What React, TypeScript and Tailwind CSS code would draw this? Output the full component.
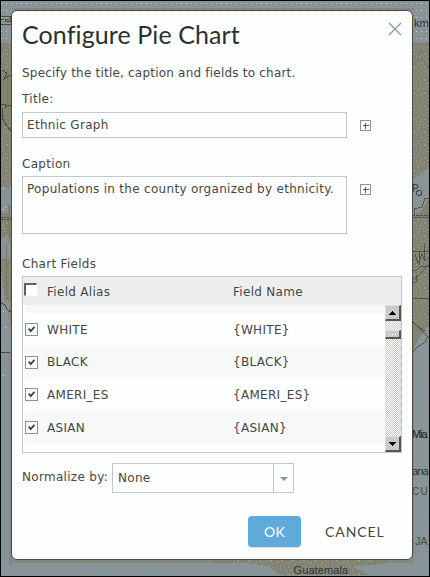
import React from "react";

const FIELDS = ["WHITE", "BLACK", "AMERI_ES", "ASIAN"];
const ROW_STYLES = [
  "flex h-[33px] items-center",
  "flex h-[32px] items-center bg-[#f7f8f8]",
  "flex h-[33px] items-center",
  "flex h-[33px] items-center bg-[#f7f8f8]",
];

function MapBackdrop() {
  return (
    <svg className="absolute inset-0" width="430" height="577" viewBox="0 0 430 577" shapeRendering="crispEdges">
      <defs>
        <pattern id="mottle" width="11" height="13" patternUnits="userSpaceOnUse">
          <path d="M0 0h2v1h-2zM3 2h1v2h-1zM1 4h2v1h-2zM6 1h2v2h-2zM9 4h1v2h-1zM5 6h2v1h-2zM2 7h1v2h-1zM8 8h2v1h-2zM0 10h1v2h-1zM4 10h3v1h-3zM9 11h1v1h-1z" fill="#8b9698" />
        </pattern>
        <pattern id="whiteDots" width="5" height="7" patternUnits="userSpaceOnUse">
          <path d="M1 3h1v1h-1z" fill="#cbd0cf" />
        </pattern>
        <pattern id="seaDots" width="13" height="9" patternUnits="userSpaceOnUse">
          <path d="M2 2h1v1h-1zM9 5h1v1h-1zM5 7h1v1h-1z" fill="#58a5cd" />
        </pattern>
        <pattern id="shade" width="2" height="2" patternUnits="userSpaceOnUse">
          <path d="M0 0h1v1h-1zM1 1h1v1h-1z" fill="#7d7d6b" />
        </pattern>
      </defs>
      <rect width="430" height="577" fill="#899498" />
      <path d="M1 2H429V5H1z" fill="url(#whiteDots)" />
      <path d="M415 5h14v36h-14zM1 9h7v30H1z" fill="url(#whiteDots)" />
      <path d="M0 43h12v140l-5 8 5 40v90l-3 10-4-30-5-40z" fill="#82826f" />
      <path d="M0 43h12v30H0zM0 125h12v225H0z" fill="url(#mottle)" />
      <path d="M1 187h7v26H1zM1 237h9v22H1zM3 302h6v34H3z" fill="#899498" />
      <path d="M3 188h1v1h-1zM5 207h1v1h-1zM3 209h1v1h-1zM4 228h1v1h-1zM3 311h1v1h-1zM5 327h1v1h-1zM3 375h1v1h-1z" fill="#dde0df" />
      <path d="M412 43h17v282l-8 10-9 17z" fill="#82826f" />
      <path d="M412 43h17v145h-17zM412 218h17v105h-17z" fill="url(#mottle)" />
      <path d="M412 180l9-6 8-6v30l-8 13-9 5z" fill="#899498" />
      <g fill="none" stroke="#494a41">
        <path d="M1 16h9v5H5v-2h4M1 19h3M1 24h10M2 70l5 3-3 6 7-4M1 104h4v4l3-3h4M2 108v10l5 8 5 6v4" />
        <path d="M1 217h11M1 219h11" strokeDasharray="2 1" />
        <path d="M1 303l4 2 2 4 5 4M1 352h11" />
        <path d="M412 215h17M414 217h15" strokeDasharray="3 1" />
        <path d="M414 215v-6l8-2 3-9h4M412 251h17M415 254l3 9 4-9 3 7 4-4M412 270h5l4-4 8 1M412 281l9-8 8-9M412 298h17M412 321l5 5 9 6M412 321l5 5 9 9 3 3M412 353l4-5 9-6 3-6M419 251v14M424 244v17M412 272v10h4v-7" strokeWidth=".8" />
        <circle cx="419" cy="193" r="2.5" strokeWidth="1" />
      </g>
      <path d="M412 43h17M419 50v5l4-4-4-1M412 66l9-8 7 10M6 245v54M9 205v38M7 82v22" fill="none" stroke="#777763" />
      <path d="M9 350h3v215H9zM412 355h2v205h-2zM12 560h402v3H12zM12 8h402v2H12z" fill="url(#shade)" />
      <path d="M213 559h174v4l-15 2-20 1 18 9H280l-12-9-23-3h-32z" fill="#82826f" />
      <path d="M225 559h150v16H260z" fill="url(#mottle)" />
      <path d="M1 565h230v10H1zM400 565h29v10h-29zM415 497h14v68h-14z" fill="url(#seaDots)" />
      <path d="M420 377h1v2h-1zM420 385h1v2h-1zM420 394h1v2h-1zM420 409h1v2h-1z" fill="#58a5cd" />
      <g fill="#30332f" fontFamily="Liberation Sans, sans-serif" fontSize="11">
        <text x="414" y="27" textLength="15">km</text>
        <text x="412" y="192" fontSize="10">P</text>
        <text x="412" y="438" fill="#171a19" textLength="16">Mia</text>
        <text x="412" y="475" textLength="17">ana</text>
        <text x="412" y="495" fontSize="10" fill="#4b4c43" textLength="16">CU</text>
        <text x="415" y="545" fill="#4b4c43" textLength="13">JA</text>
        <text x="293.5" y="574" textLength="55">Guatemala</text>
      </g>
    </svg>
  );
}

function ExpandButton() {
  return (
    <button className="flex size-[11px] shrink-0 border border-[#8b9599]">
      <svg width="9" height="9" viewBox="0 0 9 9" shapeRendering="crispEdges">
        <path d="M1.5 4.5h6M4.5 1.5v6" stroke="#5b5d54" />
      </svg>
    </button>
  );
}

function CheckedBox() {
  return (
    <span className="flex h-[13px] w-[13px] border border-[#879398] bg-[#fafbfb]">
      <svg width="11" height="11" viewBox="0 0 11 11">
        <path d="M2.7 4.7l2 2.4 3.8-4.2" fill="none" stroke="#42443f" strokeWidth="1.8" />
      </svg>
    </span>
  );
}

function ScrollArrow({ down = false }: { down?: boolean }) {
  return (
    <span className="flex h-4 w-4 shrink-0 items-center justify-center border-t border-r-2 border-b-2 border-l border-t-[#dededc] border-r-[#55564c] border-b-[#55564c] border-l-[#dededc] bg-[#c9cac9]">
      <svg width="7" height="4" viewBox="0 0 7 4" shapeRendering="crispEdges">
        <path d={down ? "M0 0h7v1H0zM1 1h5v1H1zM2 2h3v1H2zM3 3h1v1H3z" : "M3 0h1v1H3zM2 1h3v1H2zM1 2h5v1H1zM0 3h7v1H0z"} fill="#000" />
      </svg>
    </span>
  );
}

function ScrollBar() {
  return (
    <div className="flex h-[147px] w-4 flex-col bg-[conic-gradient(#c9c9c8_25%,#fff_0_50%,#c9c9c8_0_75%,#fff_0)] bg-size-[2px_2px]">
      <ScrollArrow />
      <span className="mt-[9px] flex h-[9px] w-4 items-center justify-center gap-[2px] border-t border-r-2 border-b-2 border-l border-t-[#dededc] border-r-[#55564c] border-b-[#55564c] border-l-[#dededc] bg-[#c9cac9]">
        <i className="size-px bg-white" />
        <i className="size-px bg-white" />
        <i className="size-px bg-white" />
      </span>
      <span className="mt-auto flex">
        <ScrollArrow down />
      </span>
    </div>
  );
}

export default function App() {
  return (
    <main className="relative h-[577px] w-[430px] overflow-hidden pt-[10px] pl-[11px] font-['DejaVu_Sans','Verdana',sans-serif] text-[12px] leading-4 tracking-[0.3px] whitespace-nowrap text-[#454743]">
      <MapBackdrop />
      <section className="relative flex h-[550px] w-[402px] flex-col rounded-[6px] border border-[#484b42] bg-[#fdfefe] pl-[10px]">
        <header className="flex h-[51px] items-start">
          <h1 className="mt-[7px] w-[366px] font-[Lato,sans-serif] text-[25px] leading-8 tracking-[0.1px] text-[#2e302d]">
            Configure Pie Chart
          </h1>
          <button className="mt-[11px]">
            <svg width="14" height="14" viewBox="0 0 14 14">
              <path d="M1 1l12 12M13 1L1 13" stroke="#8e9697" strokeWidth="1.3" />
            </svg>
          </button>
        </header>
        <p className="mt-[3px] tracking-[0.21px]">Specify the title, caption and fields to chart.</p>
        <label className="mt-[10px]">Title:</label>
        <div className="mt-[5px] flex items-center gap-[13px]">
          <div className="flex h-[26px] w-[325px] items-center border border-[#c5c5c3] pl-1">Ethnic Graph</div>
          <ExpandButton />
        </div>
        <label className="mt-[18px]">Caption</label>
        <div className="mt-[4px] flex gap-[13px]">
          <div className="h-[58px] w-[325px] border border-[#c5c5c3] pt-[4px] pl-1">
            Populations in the county organized by ethnicity.
          </div>
          <div className="pt-2">
            <ExpandButton />
          </div>
        </div>
        <label className="mt-[22px]">Chart Fields</label>
        <div className="mt-[4px] h-[177px] w-[380px] border border-[#c5c5c3]">
          <div className="flex h-[28px] items-center bg-[#edefef] pl-px">
            <span className="mb-[3px] size-[13px] border-t-2 border-r border-b border-l-2 border-t-[#62635b] border-r-white border-b-white border-l-[#62635b] bg-white" />
            <span className="mt-[2px] ml-[10px] w-[186px]">Field Alias</span>
            <span className="mt-[2px]">Field Name</span>
          </div>
          <div className="flex">
            <div className="w-[362px] pl-[2px]">
              <div className="h-[8px] bg-[#f7f8f8]" />
              {FIELDS.map((name, i) => (
                <div key={name} className={ROW_STYLES[i]}>
                  <CheckedBox />
                  <span className="ml-[9px] w-[186px]">{name}</span>
                  <span>{`{${name}}`}</span>
                </div>
              ))}
            </div>
            <ScrollBar />
          </div>
        </div>
        <div className="mt-[10px] flex">
          <label className="mt-[6px] w-[90px]">Normalize by:</label>
          <div className="flex h-[30px] w-[182px] border border-[#c5c5c3]">
            <span className="flex w-[161px] items-center border-r border-[#c5c5c3] pl-[5px]">None</span>
            <span className="flex flex-1 items-center justify-center pt-[2px]">
              <svg width="8" height="4" viewBox="0 0 8 4">
                <path d="M0 0h8L4 4z" fill="#8a9599" />
              </svg>
            </span>
          </div>
        </div>
        <footer className="mt-[23px] flex items-center pl-[226px] font-[Lato,sans-serif] text-[14px]">
          <button className="h-[31px] w-[53px] rounded-[4px] bg-[#5eaad8] tracking-[0.3px] text-white shadow-[0_1px_1px_#d5dcdf]">OK</button>
          <button className="ml-[24px] tracking-[0.9px]">CANCEL</button>
        </footer>
      </section>
      <div className="absolute inset-0 border border-black" />
    </main>
  );
}
